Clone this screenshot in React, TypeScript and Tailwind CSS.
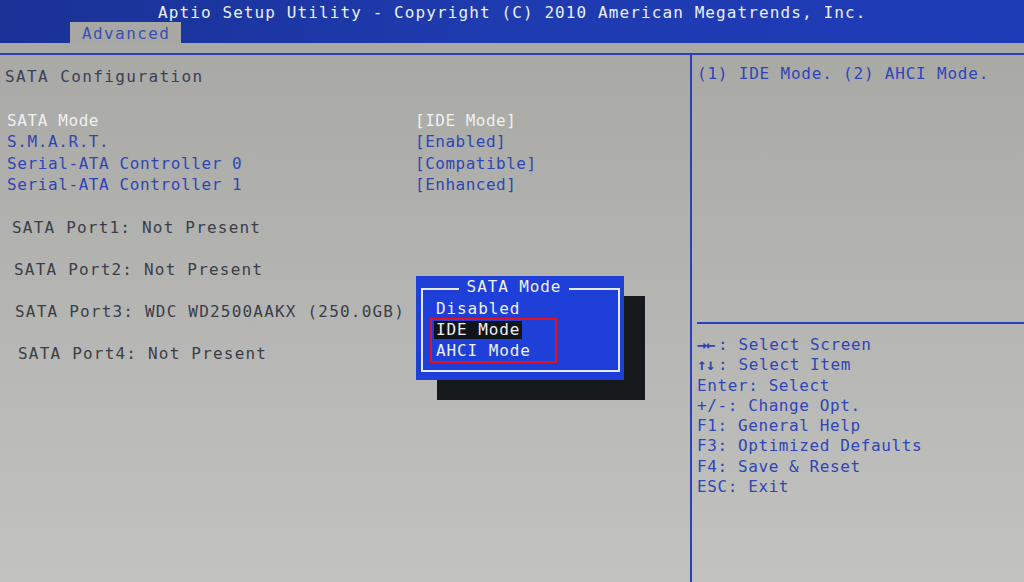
import { clsx } from "clsx";

type Setting = { label: string; value: string; active?: boolean };

const settings: Setting[] = [
  { label: "SATA Mode", value: "[IDE Mode]", active: true },
  { label: "S.M.A.R.T.", value: "[Enabled]" },
  { label: "Serial-ATA Controller 0", value: "[Compatible]" },
  { label: "Serial-ATA Controller 1", value: "[Enhanced]" },
];

// ports drift a little to the right on the panel, like the original screen
const ports = [
  { text: "SATA Port1: Not Present", indent: "pl-[7px]" },
  { text: "SATA Port2: Not Present", indent: "pl-[9px]" },
  { text: "SATA Port3: WDC WD2500AAKX (250.0GB)", indent: "pl-[10px]" },
  { text: "SATA Port4: Not Present", indent: "pl-[13px]" },
];

const keys: { key: string; action: string; arrows?: boolean }[] = [
  { key: "→←", action: ": Select Screen", arrows: true },
  { key: "↑↓", action: ": Select Item", arrows: true },
  { key: "Enter", action: ": Select" },
  { key: "+/-", action: ": Change Opt." },
  { key: "F1", action: ": General Help" },
  { key: "F3", action: ": Optimized Defaults" },
  { key: "F4", action: ": Save & Reset" },
  { key: "ESC", action: ": Exit" },
];

const options = ["Disabled", "IDE Mode", "AHCI Mode"];

const SataModePopup = () => {
  return (
    <>
      {/* drop shadow */}
      <div className="absolute left-[437px] top-[296px] w-[208px] h-[104px] bg-[#15191c]" />
      <div className="absolute left-[416px] top-[276px] w-[208px] h-[104px] bg-[#1e3fd8]">
        <div className="absolute left-[5px] top-[12px] right-[4px] bottom-[8px] border-2 border-[#e6e9f4]" />
        <div className="absolute left-0 right-[12px] top-[1px] flex justify-center">
          <span className="bg-[#1e3fd8] px-[8px] leading-[20px] text-[#eef0f8] tracking-[0.9px]">
            SATA Mode
          </span>
        </div>
        <div className="absolute left-[20px] top-[22px] flex flex-col">
          {options.map((opt) => (
            <div key={opt} className="h-[21px] flex items-center">
              <span
                className={clsx(
                  "leading-[18px] tracking-[0.9px] text-[#eef0f8]",
                  opt === "IDE Mode" && "bg-[#101418] pr-[2px] -ml-[2px] pl-[2px]"
                )}
              >
                {opt}
              </span>
            </div>
          ))}
        </div>
        {/* red selection marker */}
        <div className="absolute left-[14px] top-[42px] w-[127px] h-[45px] border-2 border-[#e3121c]" />
      </div>
    </>
  );
};

export default function App() {
  return (
    <div
      className="relative w-[1024px] h-[582px] overflow-hidden bg-linear-to-b from-[#a6a7a3] to-[#c2c3c0] text-[16px]"
      style={{ fontFamily: '"DejaVu Sans Mono", "Liberation Mono", monospace' }}
    >
      {/* Title bar */}
      <div className="h-[43px] bg-linear-to-r from-[#1a3296] via-[#1e3bb0] to-[#1f3cb8] flex flex-col">
        <div className="h-[22px] pl-[158px] leading-[25px] text-[#eceff8] tracking-[1.1px]">
          Aptio Setup Utility - Copyright (C) 2010 American Megatrends, Inc.
        </div>
        <div className="h-[21px] pl-[70px] flex">
          <div className="w-[111px] h-full bg-[#a7a8a4] pl-[12px] leading-[23px] text-[#3a4fb2] tracking-[1.4px]">
            Advanced
          </div>
        </div>
      </div>

      <div className="h-[10px]" />
      <div className="h-[2px] bg-[#2c3fc2]" />

      <div className="flex h-[527px]">
        {/* Settings column */}
        <div className="w-[690px] pl-[5px] pt-[12px]">
          <p className="leading-[20px] text-[#3b4058] tracking-[1.4px]">SATA Configuration</p>

          <div className="mt-[23px] flex flex-col pl-[2px]">
            {settings.map((s) => (
              <div key={s.label} className="h-[21.5px] flex items-center">
                <span
                  className={clsx(
                    "w-[408px] tracking-[0.6px]",
                    s.active ? "text-[#eff0f2]" : "text-[#3045b6]"
                  )}
                >
                  {s.label}
                </span>
                <span
                  className={clsx(
                    "tracking-[0.5px]",
                    s.active ? "text-[#eff0f2]" : "text-[#3045b6]"
                  )}
                >
                  {s.value}
                </span>
              </div>
            ))}
          </div>

          <div className="mt-[22px] flex flex-col gap-[22px]">
            {ports.map((p) => (
              <p key={p.text} className={clsx("leading-[20px] text-[#3b3d49] tracking-[1.2px]", p.indent)}>
                {p.text}
              </p>
            ))}
          </div>
        </div>

        {/* Help column */}
        <div className="flex-1 border-l-2 border-[#2c3fc2] flex flex-col">
          <p className="pl-[5px] pt-[9px] h-[267px] leading-[20px] text-[#3045b6] tracking-[0.8px]">
            (1) IDE Mode. (2) AHCI Mode.
          </p>
          <div className="ml-[5px] h-[2px] bg-[#2c3fc2]" />
          <div className="pl-[5px] pt-[11px] flex flex-col">
            {keys.map((k) => (
              <p key={k.key} className="h-[20.3px] leading-[20px] text-[#3045b6] tracking-[0.6px] whitespace-pre">
                <span
                  className={clsx(
                    k.arrows && "inline-block w-[21px] font-bold text-[16px] leading-[16px] tracking-[-1px]"
                  )}
                >
                  {k.key}
                </span>
                {k.action}
              </p>
            ))}
          </div>
        </div>
      </div>

      <SataModePopup />
    </div>
  );
}
